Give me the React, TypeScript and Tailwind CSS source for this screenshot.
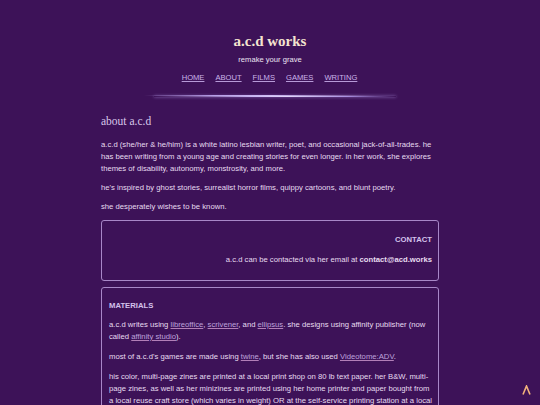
import React from "react";

const A = ({ children }: { children: React.ReactNode }) => (
  <a href="#" className="text-[#bfa2dc] underline decoration-[#b27fb8] underline-offset-[1px]">
    {children}
  </a>
);

export default function App() {
  return (
    <div className="min-h-screen bg-[#3d1258] text-[#e7dcf0] pb-10" style={{ fontFamily: '"Liberation Sans", Arial, sans-serif' }}>
      <header className="flex flex-col items-center pt-[32px]">
        <h1 className="text-[15px] leading-[18px] font-bold text-[#f4e3cf]" style={{ fontFamily: '"Liberation Serif", "DejaVu Serif", serif' }}>
          a.c.d works
        </h1>
        <p className="mt-[4px] text-[7.6px] leading-[12px] text-[#ece4f3]">remake your grave</p>
        <nav className="mt-[6px] flex gap-[10px] text-[7.6px] leading-[12px]">
          {["HOME", "ABOUT", "FILMS", "GAMES", "WRITING"].map((n) => (
            <a key={n} href="#" className="text-[#cbb4ea] underline decoration-[#b79ad8] underline-offset-[1px] pr-[1px]">
              {n}
            </a>
          ))}
        </nav>
        <div className="relative mt-[11px] h-[3px] w-[252px]">
          <div className="absolute left-0 right-[20px] top-0 h-[1px] bg-[linear-gradient(90deg,transparent,#b9a0e8_30%,#d8c8f8_55%,transparent)]" />
          <div className="absolute left-[10px] right-0 top-[1px] h-[1px] bg-[linear-gradient(90deg,transparent,#c9b6f4_40%,#e2d6fb_55%,#a98ee0_80%,transparent)] shadow-[0_0_3px_#b69ae8]" />
        </div>
      </header>

      <main className="mx-auto mt-[16px] w-[338px]">
        <h2 className="text-[11.5px] leading-[14px] text-[#d8c7ea]" style={{ fontFamily: '"Liberation Serif", "DejaVu Serif", serif' }}>
          about a.c.d
        </h2>
        <div className="mt-[11px] flex flex-col gap-[7px] text-[7.7px] leading-[12px]">
          <p>
            a.c.d (she/her &amp; he/him) is a white latino lesbian writer, poet, and occasional jack-of-all-trades. he has been writing from a young age and creating stories for even longer. in her work, she explores themes of disability, autonomy, monstrosity, and more.
          </p>
          <p>he's inspired by ghost stories, surrealist horror films, quippy cartoons, and blunt poetry.</p>
          <p>she desperately wishes to be known.</p>
        </div>

        <section className="mt-[7px] rounded-[3px] border border-[#a887c8] pt-[13px] pb-[14px] pr-[6px] pl-[7px] text-right text-[7.7px] leading-[12px]">
          <h3 className="font-bold text-[#d4c2ec]">CONTACT</h3>
          <p className="mt-[8px]">
            a.c.d can be contacted via her email at <b>contact@acd.works</b>
          </p>
        </section>

        <section className="mt-[6px] rounded-[3px] border border-[#a887c8] pt-[12px] pb-[14px] pl-[7px] pr-[6px] text-[7.7px] leading-[12px]">
          <h3 className="font-bold text-[#d4c2ec]">MATERIALS</h3>
          <div className="mt-[7px] flex flex-col gap-[8px]">
            <p>
              a.c.d writes using <A>libreoffice</A>, <A>scrivener</A>, and <A>ellipsus</A>. she designs using affinity publisher (now called <A>affinity studio</A>).
            </p>
            <p>
              most of a.c.d's games are made using <A>twine</A>, but she has also used <A>Videotome:ADV</A>.
            </p>
            <p>
              his color, multi-page zines are printed at a local print shop on 80 lb text paper. her B&amp;W, multi-page zines, as well as her minizines are printed using her home printer and paper bought from a local reuse craft store (which varies in weight) OR at the self-service printing station at a local library.
            </p>
          </div>
        </section>
      </main>

      <a href="#" className="fixed right-[9px] bottom-[10px] block">
        <svg width="9" height="10" viewBox="0 0 9 10" fill="none">
          <path d="M1 9.5 L4.5 1 L8 9.5" stroke="#f2b37c" strokeWidth="1.6" strokeLinejoin="miter" />
        </svg>
      </a>
    </div>
  );
}
